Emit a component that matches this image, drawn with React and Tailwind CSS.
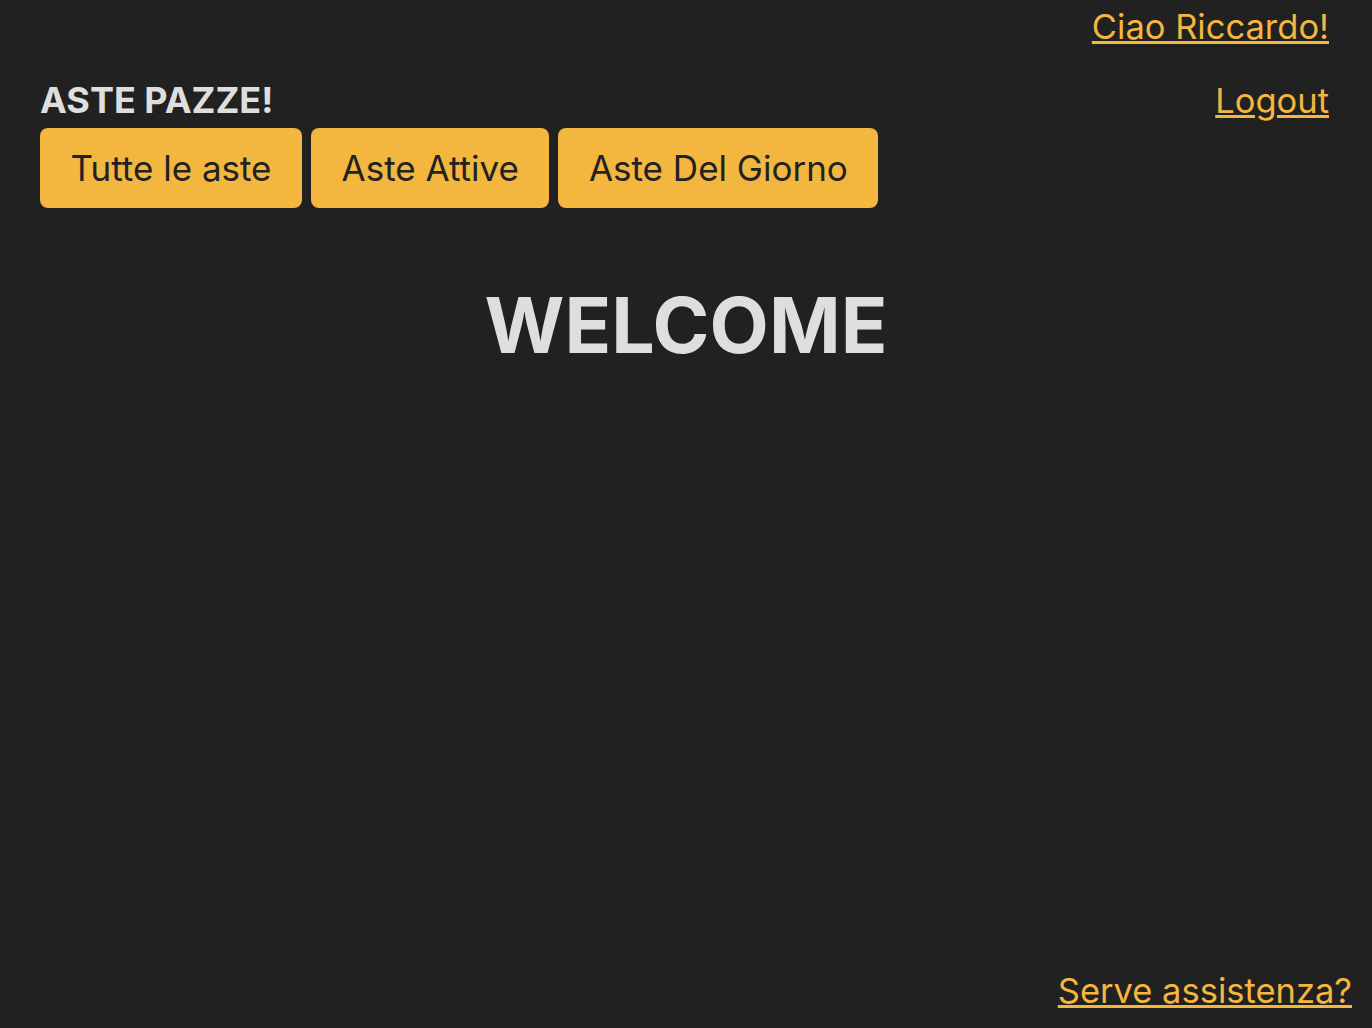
import React from 'react';

const NAV = ['Tutte le aste', 'Aste Attive', 'Aste Del Giorno'];

const App = () => {
  return (
    <div className="min-h-screen bg-[#212121] flex flex-col font-['Inter',sans-serif] text-[#dedede]">
      <header className="flex justify-between pl-10 pr-[43px]">
        <div className="pt-[78px]">
          <h1 className="text-[36px] font-bold leading-[44px]">ASTE PAZZE!</h1>
          <nav className="flex gap-[9px] mt-[6px]">
            {NAV.map((label) => (
              <button
                key={label}
                className="h-20 px-[30.5px] rounded-lg bg-[#f3b63f] text-[#222] text-[35px]"
              >
                {label}
              </button>
            ))}
          </nav>
        </div>
        <div className="flex flex-col items-end pt-[6px] gap-[32px]">
          <a href="#" className="text-[34.5px] leading-[42px] text-[#f3b63f] underline">Ciao Riccardo!</a>
          <a href="#" className="text-[34.5px] leading-[42px] text-[#f3b63f] underline">Logout</a>
        </div>
      </header>

      <main className="flex-1">
        <h2 className="text-center text-[77px] font-bold mt-[60px]">WELCOME</h2>
      </main>

      <footer className="flex justify-end pr-5 pb-4">
        <a href="#" className="text-[34.5px] leading-[42px] text-[#f3b63f] underline">Serve assistenza?</a>
      </footer>
    </div>
  );
};

export default App;
